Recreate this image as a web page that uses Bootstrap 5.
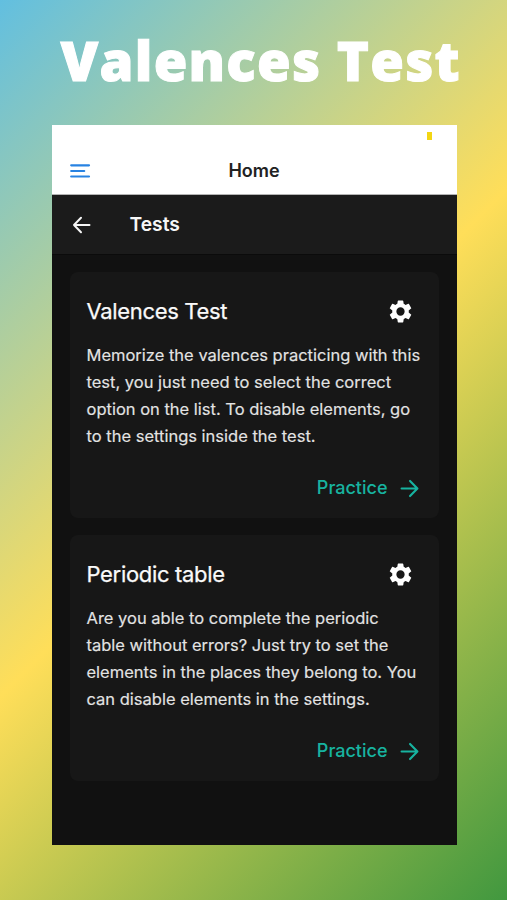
<!DOCTYPE html>
<html lang="en">
<head>
<meta charset="utf-8">
<meta name="viewport" content="width=device-width, initial-scale=1">
<title>Valences Test</title>
<link href="https://cdn.jsdelivr.net/npm/bootstrap@5.3.0/dist/css/bootstrap.min.css" rel="stylesheet">
<style>
body{font-family:Inter,"Liberation Sans",sans-serif;height:900px;overflow:hidden;background:linear-gradient(135deg,#62bfe0 0%,#ffde59 49.5%,#41983f 100%)}
.promo{height:125px;padding:22px 0 0 60.5px;font:800 54.5px/76px "Open Sans",sans-serif;letter-spacing:1.25px;white-space:nowrap;-webkit-text-stroke:1px #fff}
.phone{width:405px;height:720px;margin-left:51.5px;background:#111}
.topbar{height:70px;padding:0 18px;border-bottom:1px solid #b4b4b4}
.topbar-row{height:46px}
.battery{width:5px;height:8px;margin:7px 7px 0 0;background:#f3d614}
.home-title{font-size:18px;color:#222;line-height:46px}
.subbar{height:60px;padding:0 20px;background:#1b1b1b;border-bottom:1px solid #0b0b0b}
.subbar-title{font-size:19.3px;margin-left:39px;color:#f7f7f7}
.tests{padding:17px 18px;gap:17px}
.test-card{height:246px;padding:25px 19px 0 17px;background:#171717;border-radius:8px}
.test-name{font-size:22px;line-height:28px;letter-spacing:-.33px;color:#fafafa;-webkit-text-stroke:.25px #fafafa}
.test-text{font-size:16.5px;line-height:27px;margin-top:17px;color:#e3e3e3;white-space:nowrap;-webkit-text-stroke:.15px #e3e3e3}
.practice{font-size:18px;line-height:24px;margin:26px 1px 0 0;gap:12px;color:#17b3a0}
</style>
<script src="https://cdn.jsdelivr.net/npm/bootstrap@5.3.0/dist/js/bootstrap.bundle.min.js"></script>
</head>
<body>
<svg class="d-none">
<symbol id="gear" viewBox="2 2 20 20"><path fill="currentColor" d="M19.14 12.94c.04-.3.06-.61.06-.94s-.02-.64-.07-.94l2.03-1.58a.49.49 0 0 0 .12-.61l-1.92-3.32a.49.49 0 0 0-.59-.22l-2.39.96a7 7 0 0 0-1.62-.94l-.36-2.54a.48.48 0 0 0-.48-.41h-3.84a.48.48 0 0 0-.47.41l-.36 2.54a7.2 7.2 0 0 0-1.62.94l-2.39-.96a.48.48 0 0 0-.59.22L2.74 8.87a.48.48 0 0 0 .12.61l2.03 1.58a6 6 0 0 0 0 1.88l-2.03 1.58a.49.49 0 0 0-.12.61l1.92 3.32c.12.22.37.29.59.22l2.39-.96c.5.38 1.03.7 1.62.94l.36 2.54c.05.24.24.41.48.41h3.84c.24 0 .44-.17.47-.41l.36-2.54a7.2 7.2 0 0 0 1.62-.94l2.39.96c.22.08.47 0 .59-.22l1.92-3.32a.48.48 0 0 0-.12-.61zM12 15.6a3.6 3.6 0 1 1 0-7.2 3.6 3.6 0 0 1 0 7.2z"/></symbol>
<symbol id="arrow" viewBox="0 0 18 18"><path d="M1.5 9H16M9.5 1.8 16.5 9l-7 7.2" fill="none" stroke="currentColor" stroke-width="2" stroke-linecap="round" stroke-linejoin="round"/></symbol>
</svg>
<h1 class="promo text-white mb-0">Valences Test</h1>
<main class="phone">
<header class="topbar bg-white">
<div class="d-flex justify-content-end" style="height:23px"><span class="battery"></span></div>
<div class="topbar-row row g-0 align-items-center">
<div class="col d-flex"><svg width="21" height="16" viewBox="0 0 21 16"><path d="M1.2 2.3h17.8M1.2 8h13M1.2 13.5h17.8" stroke="#2883e2" stroke-width="2.2" stroke-linecap="round"/></svg></div>
<div class="col-auto home-title fw-semibold">Home</div>
<div class="col"></div>
</div>
</header>
<div class="subbar d-flex align-items-center">
<svg width="19" height="18" viewBox="0 0 19 18"><path d="M17.5 9H2M9 1.8 2 9l7 7.2" fill="none" stroke="#f5f5f5" stroke-width="2" stroke-linecap="round" stroke-linejoin="round"/></svg>
<span class="subbar-title fw-semibold">Tests</span>
</div>
<div class="tests d-flex flex-column">
<section class="test-card">
<div class="d-flex justify-content-between align-items-center pe-2"><h2 class="test-name mb-0 fw-normal">Valences Test</h2><svg class="text-white" width="23" height="23"><use href="#gear"/></svg></div>
<p class="test-text mb-0">Memorize the valences practicing with this<br>test, you just need to select the correct<br>option on the list. To disable elements, go<br>to the settings inside the test.</p>
<div class="practice d-flex justify-content-end align-items-center fw-medium"><span>Practice</span><svg width="19" height="19"><use href="#arrow"/></svg></div>
</section>
<section class="test-card">
<div class="d-flex justify-content-between align-items-center pe-2"><h2 class="test-name mb-0 fw-normal">Periodic table</h2><svg class="text-white" width="23" height="23"><use href="#gear"/></svg></div>
<p class="test-text mb-0">Are you able to complete the periodic<br>table without errors? Just try to set the<br>elements in the places they belong to. You<br>can disable elements in the settings.</p>
<div class="practice d-flex justify-content-end align-items-center fw-medium"><span>Practice</span><svg width="19" height="19"><use href="#arrow"/></svg></div>
</section>
</div>
</main>
</body>
</html>
